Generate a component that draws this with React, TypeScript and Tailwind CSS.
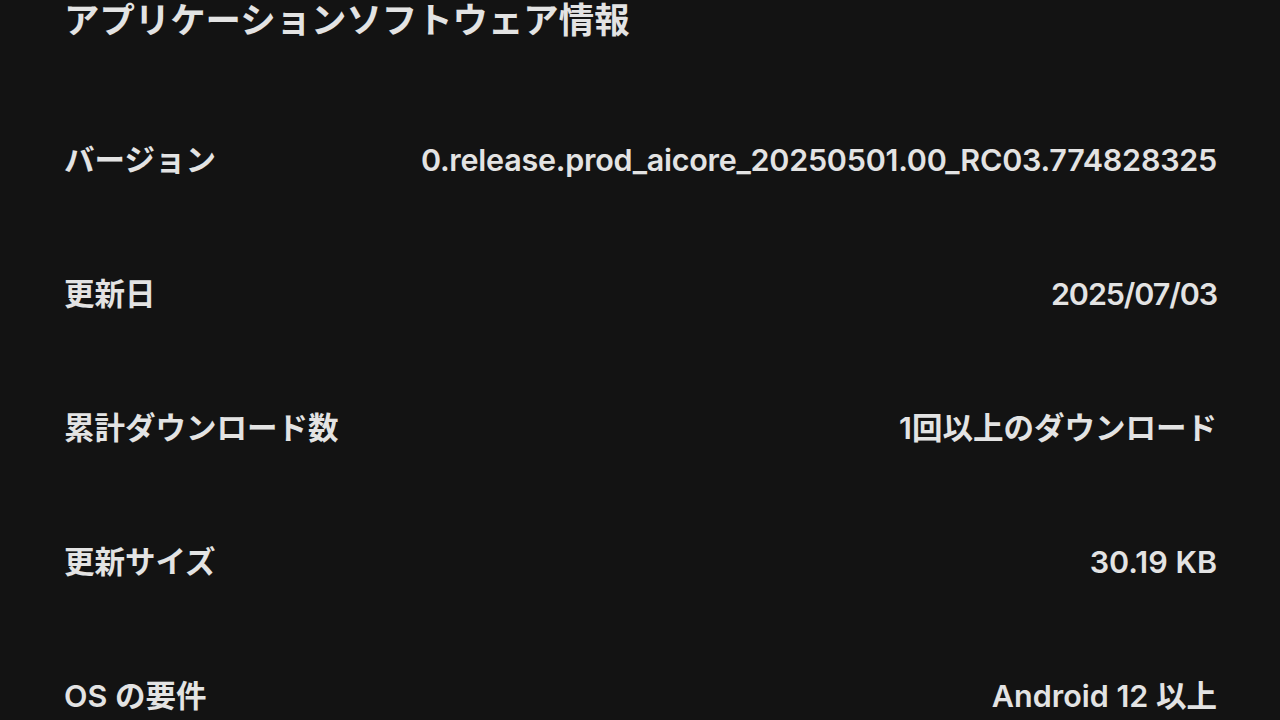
import React from "react";

const rows: { k: string; v: string; vc: string }[] = [
  { k: "バージョン", v: "0.release.prod_aicore_20250501.00_RC03.774828325", vc: "tracking-[-0.25px]" },
  { k: "更新日", v: "2025/07/03", vc: "tracking-[-1.1px]" },
  { k: "累計ダウンロード数", v: "1回以上のダウンロード", vc: "" },
  { k: "更新サイズ", v: "30.19 KB", vc: "" },
  { k: "OS の要件", v: "Android 12 以上", vc: "" },
];

export default function App() {
  return (
    <div
      className="w-[1280px] h-[720px] overflow-hidden bg-[#131313] text-[#e3e3e3] pl-[64px] pr-[63px]"
      style={{ fontFamily: 'Inter, "Noto Sans CJK JP", sans-serif' }}
    >
      <div className="h-[40px] pt-[1px] flex items-center text-[35.4px] font-semibold leading-none">
        アプリケーションソフトウェア情報
      </div>
      <div className="mt-[53px] flex flex-col">
        {rows.map((r) => (
          <div key={r.k} className="h-[134px] flex items-center justify-between text-[30.5px] font-semibold leading-none">
            <span>{r.k}</span>
            <span className={r.vc}>{r.v}</span>
          </div>
        ))}
      </div>
    </div>
  );
}
